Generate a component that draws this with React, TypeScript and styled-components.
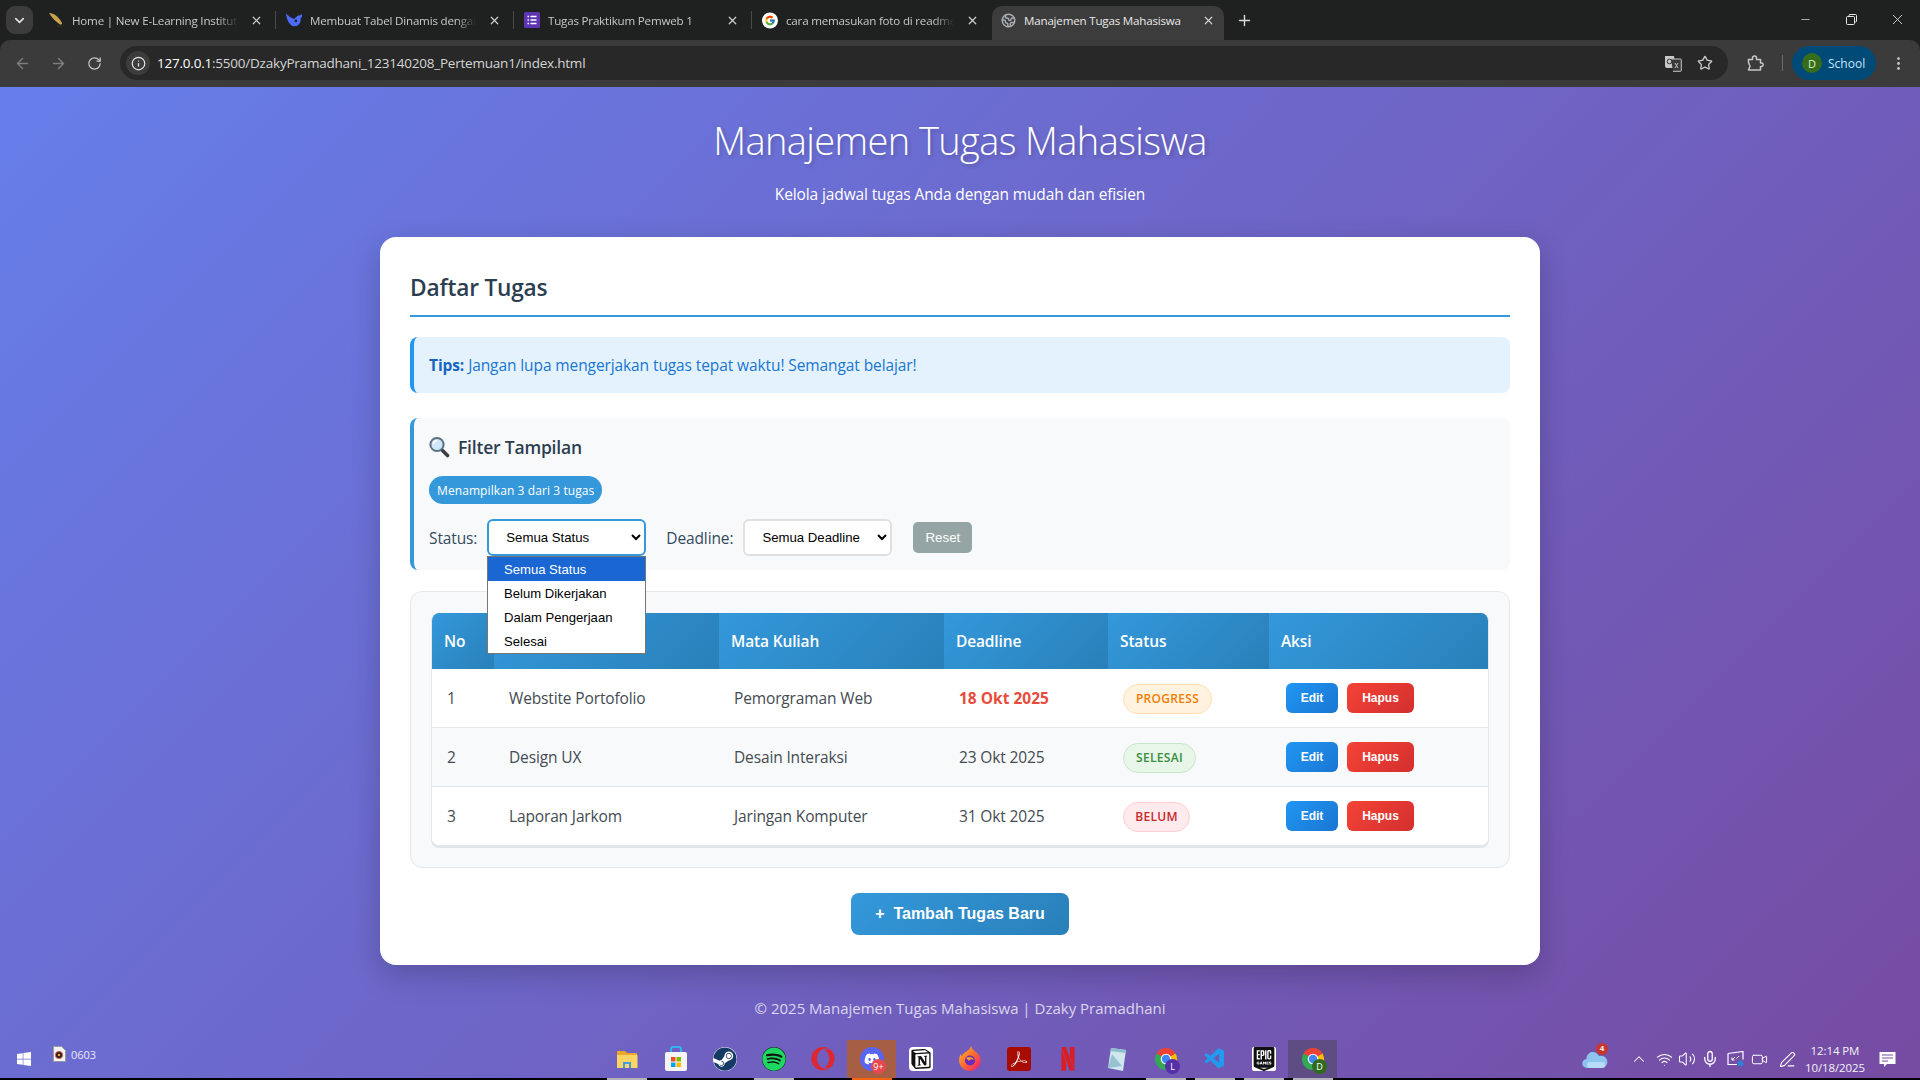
import React from "react";
import styled, { createGlobalStyle } from "styled-components";
import { FaWindows, FaSteam, FaSpotify, FaOpera, FaDiscord } from "react-icons/fa";
import { SiNotion, SiNetflix, SiEpicgames, SiAdobeacrobatreader } from "react-icons/si";
import { VscVscode } from "react-icons/vsc";
import { FcGoogle } from "react-icons/fc";
import { ArrowLeft, ArrowRight, RotateCw, Info, Star, EllipsisVertical, Minus, X, Plus, ChevronDown, ChevronUp, Wifi, Volume2, Mic, Video, PenLine, Earth } from "lucide-react";

const UI = `"Open Sans", "Noto Sans", sans-serif`;
const ARIAL = `"Liberation Sans", Arial, sans-serif`;

const Global = createGlobalStyle`
  html, body { margin: 0; padding: 0; width: 1920px; height: 1080px; overflow: hidden; background: #000; }
  * { box-sizing: border-box; }
  body { font-family: ${UI}; }
`;

const Root = styled.div`
  width: 1920px; height: 1080px; display: flex; flex-direction: column;
`;

/* ---------- browser chrome ---------- */
const BrowserChrome = styled.header`
  height: 87px; flex: none; background: #1f2121; display: flex; flex-direction: column;
`;
const TabStrip = styled.div`
  height: 40px; display: flex; align-items: flex-end; padding-left: 6px; position: relative;
`;
const TabSearch = styled.div`
  width: 27px; height: 28px; margin: 0 5px 6px 0; border-radius: 9px; background: #3c3c3c;
  display: flex; align-items: center; justify-content: center; color: #e3e3e3; flex: none;
`;
const Tab = styled.div<{ $active?: boolean; $w?: number }>`
  width: ${p => p.$w ?? 238}px; height: 34px; flex: none; display: flex; align-items: center; position: relative;
  padding: 0 ${p => (p.$active ? 8 : 12)}px 6px ${p => (p.$active ? 8 : 10)}px; border-radius: 10px 10px 0 0; font-size: 11.6px; font-family: ${UI};
  background: ${p => (p.$active ? "#3c3c3c" : "transparent")};
  color: ${p => (p.$active ? "#e8e8e8" : "#c7c7c7")};
`;
const TabIconBox = styled.span`
  width: 16px; height: 16px; flex: none; display: flex; align-items: center; justify-content: center; margin-right: 8px;
`;
const TabTitle = styled.span<{ $plain?: boolean }>`
  flex: 1; white-space: nowrap; overflow: hidden; letter-spacing: -0.2px;
  ${p => (p.$plain ? "" : `
  -webkit-mask-image: linear-gradient(90deg, #000 88%, transparent);
  mask-image: linear-gradient(90deg, #000 88%, transparent);`)}
`;
const TabClose = styled.span`
  width: 16px; height: 16px; flex: none; margin: 0 0 0 10px; display: flex; align-items: center; justify-content: center; color: #d0d0d0;
`;
const TabSep = styled.span`
  width: 1px; height: 18px; background: #4a4a4a; position: absolute; right: 0; top: 5px;
`;
const NewTab = styled.div`
  width: 30px; height: 28px; margin: 0 0 6px 5px; display: flex; align-items: center; justify-content: center; color: #d8d8d8;
`;
const WindowControls = styled.div`
  margin-left: auto; align-self: flex-start; display: flex; color: #e6e6e6;
`;
const WinBtn = styled.div`
  width: 46px; height: 38px; display: flex; align-items: center; justify-content: center;
`;
const Toolbar = styled.div`
  height: 47px; background: #3b3b3b; border-radius: 10px 10px 0 0; display: flex; align-items: flex-start; padding: 6px 0 0 0;
`;
const NavBtn = styled.div<{ $dim?: boolean }>`
  width: 36px; height: 34px; flex: none; display: flex; align-items: center; justify-content: center;
  color: ${p => (p.$dim ? "#7d7d7d" : "#c7c7c7")};
`;
const NavGroup = styled.div`
  display: flex; padding-left: 4px; width: 120px; flex: none;
`;
const Omnibox = styled.div`
  width: 1608px; height: 34px; background: #282828; border-radius: 17px; display: flex; align-items: center; padding: 0 6px; flex: none;
`;
const SiteInfo = styled.div`
  width: 24px; height: 24px; border-radius: 50%; background: #3c3c3c; color: #e3e3e3; display: flex; align-items: center; justify-content: center; margin-right: 7px; flex: none;
`;
const UrlText = styled.span`
  flex: 1; font-size: 13.5px; color: #d4d4d4; font-family: ${UI}; letter-spacing: -0.22px;
`;
const UrlHost = styled.span`
  color: #fff;
`;
const OmniIcon = styled.div<{ $w: number; $mr?: number }>`
  width: ${p => p.$w}px; margin-right: ${p => p.$mr ?? 0}px; display: flex; justify-content: center; align-items: center; color: #c7c7c7; flex: none;
`;
const ToolbarRight = styled.div`
  flex: 1; height: 34px; display: flex; align-items: center; color: #c7c7c7;
`;
const Divider = styled.span`
  width: 1px; height: 16px; background: #6a6a6a; margin: 0 9px 0 0; flex: none;
`;
const Profile = styled.div`
  width: 84px; height: 34px; border-radius: 17px; background: #004a77; display: flex; align-items: center; padding-left: 10px; color: #c2e7ff; font-size: 12px; font-family: ${UI}; flex: none;
`;
const Avatar = styled.span`
  width: 20px; height: 20px; border-radius: 50%; background: #356d1c; color: #d9f4c8; font-size: 11px; display: flex; align-items: center; justify-content: center; margin-right: 6px;
`;

/* ---------- page ---------- */
const Page = styled.main`
  flex: 1; min-height: 0; display: flex; flex-direction: column; align-items: center;
  background: linear-gradient(135deg, #667eea 0%, #764ba2 100%);
`;
const Title = styled.h1`
  margin: 28px 0 0; height: 50px; line-height: 50px; font-size: 38px; font-weight: 300; color: #fff; letter-spacing: -0.6px;
  text-shadow: 2px 2px 4px rgba(0,0,0,0.2); font-family: ${UI};
`;
const Subtitle = styled.p`
  margin: 18px 0 0; height: 22px; line-height: 22px; font-size: 15.5px; color: #fff; letter-spacing: -0.12px;
`;
const Card = styled.section`
  width: 1160px; height: 728px; margin-top: 32px; flex: none; background: #fff; border-radius: 16px; padding: 30px;
  box-shadow: 0 10px 30px rgba(0,0,0,0.2); position: relative;
`;
const CardTitle = styled.h2`
  margin: 0; height: 50px; line-height: 42px; font-size: 22.7px; font-weight: 600; color: #2c3e50; letter-spacing: -0.2px;
  border-bottom: 2px solid #3498db;
`;
const Tips = styled.div`
  margin-top: 20px; height: 56px; background: #e3f2fd; border-left: 4px solid #2196f3; border-radius: 8px;
  display: flex; align-items: center; padding-left: 15px; font-size: 15.5px; color: #1976d2; letter-spacing: -0.1px;
  strong { font-weight: 700; color: #1565c0; margin-right: 4px; }
`;
const FilterBox = styled.div`
  margin-top: 25px; height: 152px; background: #f8f9fa; border-left: 4px solid #3498db; border-radius: 8px;
  padding: 17px 15px 0; position: relative;
`;
const FilterHead = styled.h3`
  margin: 0; height: 24px; display: flex; align-items: center; gap: 8px; font-size: 17.5px; font-weight: 600; color: #2c3e50; letter-spacing: -0.2px;
`;
const CountBadge = styled.span`
  display: inline-flex; align-items: center; height: 28px; margin-top: 17px; padding: 0 8px; background: #3498db; color: #fff; border-radius: 14px; font-size: 12px; letter-spacing: 0.09px; white-space: nowrap;
`;
const FilterRow = styled.div`
  display: flex; align-items: center; margin-top: 15px; height: 37px;
`;
const FilterLabel = styled.label`
  font-size: 15.5px; font-weight: 500; color: #34495e; margin-right: 10px; letter-spacing: -0.12px;
`;
const FilterSelect = styled.select<{ $w: number; $focus?: boolean }>`
  width: ${p => p.$w}px; height: 37px; margin-right: ${p => (p.$focus ? 20 : 21)}px; padding: 0 8px 0 13px; background: #fff; color: #000;
  border: 2px solid ${p => (p.$focus ? "#3498db" : "#e0e0e0")}; border-radius: 6px; font: 13.2px ${ARIAL}; outline: none;
`;
const ResetBtn = styled.button`
  width: 59px; height: 31px; border: 0; border-radius: 5px; background: #95a5a6; color: #fff; font: 13.33px ${ARIAL}; padding: 0;
`;
const DropList = styled.ul`
  position: absolute; left: 73px; top: 138px; width: 159px; margin: 0; padding: 0; list-style: none; background: #fff;
  border: 1px solid #767676; z-index: 5;
`;
const DropItem = styled.li<{ $on?: boolean }>`
  height: 24px; padding-left: 16px; font: 13.1px/25px ${ARIAL};
  background: ${p => (p.$on ? "#1a66d2" : "#fff")}; color: ${p => (p.$on ? "#fff" : "#000")};
`;
const TableWrap = styled.div`
  margin-top: 21px; height: 277px; padding: 21px 20px 0; background: #f8f9fa; border: 1px solid #e4e8ec; border-radius: 12px;
`;
const TableBox = styled.div`
  border-radius: 8px; overflow: hidden; border: 1px solid #e2e7eb; border-top: 0; box-shadow: 0 2px 0 #dfe5ea; background: #fff;
`;
const DataTable = styled.table`
  width: 100%; border-collapse: separate; border-spacing: 0; table-layout: fixed;
`;
const Th = styled.th<{ $w: number }>`
  width: ${p => p.$w}px; height: 56px; padding: 0 12px; text-align: left; color: #fff; font-size: 15.5px; font-weight: 600; letter-spacing: -0.14px;
  background: linear-gradient(135deg, #3498db, #2980b9);
`;
const Tr = styled.tr<{ $alt?: boolean }>`
  background: ${p => (p.$alt ? "#f8f9fa" : "#fff")};
  &:last-child td { border-bottom: 0; height: 58px; }
`;
const Td = styled.td<{ $late?: boolean }>`
  height: 59px; padding: 0 15px; font-size: 15.5px; border-bottom: 1px solid #e4e8ec;
  color: ${p => (p.$late ? "#e74c3c" : "#444b52")}; font-weight: ${p => (p.$late ? 700 : 400)}; letter-spacing: ${p => (p.$late ? "0" : "-0.14px")};
`;
const Pill = styled.span<{ $bg: string; $fg: string; $bd: string; $w: number }>`
  display: flex; align-items: center; justify-content: center; width: ${p => p.$w}px; height: 30px; border-radius: 15px; margin-top: 1px;
  background: ${p => p.$bg}; color: ${p => p.$fg}; border: 1px solid ${p => p.$bd}; font-size: 12px; font-weight: 600; letter-spacing: 0.3px;
`;
const Actions = styled.div`
  display: flex; gap: 9px; padding-left: 2px;
`;
const SmallBtn = styled.button<{ $w: number; $from: string; $to: string }>`
  width: ${p => p.$w}px; height: 30px; border: 0; padding: 0; border-radius: 6px; color: #fff; font: bold 12px ${ARIAL};
  background: linear-gradient(135deg, ${p => p.$from}, ${p => p.$to});
`;
const AddRow = styled.div`
  display: flex; justify-content: center; margin-top: 25px;
`;
const AddBtn = styled.button`
  width: 218px; height: 42px; border: 0; border-radius: 8px; color: #fff; font: bold 16px ${ARIAL}; padding: 0;
  background: linear-gradient(135deg, #3498db, #2980b9); white-space: pre;
`;
const Footer = styled.footer`
  margin-top: 32px; height: 22px; line-height: 22px; font-size: 15px; color: rgba(255,255,255,0.75);
`;

/* ---------- taskbar ---------- */
const Taskbar = styled.div`
  width: 100%; height: 40px; margin-top: auto; display: flex; border-bottom: 2px solid #000; color: #fff; flex: none;
`;
const TaskLeft = styled.div`
  width: 602px; height: 38px; display: flex; align-items: center; flex: none;
`;
const StartBtn = styled.div`
  width: 48px; display: flex; justify-content: center;
`;
const DesktopFile = styled.div`
  display: flex; align-items: center; gap: 5px; margin: -10px 0 0 5px; font-size: 11px; color: #e8e8ff;
`;
const AppCell = styled.div<{ $bg?: string; $bar?: string }>`
  width: 49px; height: 38px; position: relative; display: flex; align-items: center; justify-content: center; flex: none;
  background: ${p => p.$bg ?? "transparent"};
  &::after {
    content: ""; position: absolute; left: 5px; right: 4px; bottom: -2px; height: 2px;
    background: ${p => p.$bar ?? "transparent"};
  }
`;
const AppRound = styled.span<{ $bg: string; $r?: string }>`
  width: 24px; height: 24px; border-radius: ${p => p.$r ?? "50%"}; background: ${p => p.$bg}; display: flex; align-items: center; justify-content: center;
`;
const AppBadge = styled.span<{ $bg: string }>`
  position: absolute; right: 10px; bottom: 4px; min-width: 15px; height: 15px; border-radius: 50%;
  background: ${p => p.$bg}; color: #fff; font-size: 9px; line-height: 15px; text-align: center;
`;
const Tray = styled.div`
  margin-left: auto; height: 38px; display: flex; align-items: center; padding-right: 12px; flex: none;
`;
const TraySlot = styled.div<{ $w: number; $ml?: number }>`
  width: ${p => p.$w}px; margin-left: ${p => p.$ml ?? 0}px; display: flex; justify-content: center; align-items: center; position: relative; flex: none;
`;
const Clock = styled.div`
  text-align: center; font-size: 11.5px; line-height: 17px; color: #f2f0f8; letter-spacing: -0.1px;
`;
const CloudBadge = styled.span`
  position: absolute; top: -6px; right: 7px; width: 12px; height: 12px; border-radius: 50%; background: #c8352c; color: #fff; font: bold 8px/12px ${ARIAL}; text-align: center;
`;

/* ---------- drawn icons ---------- */
const Feather = () => (
  <svg width="16" height="16" viewBox="0 0 16 16"><path d="M1 1c5 0 10 4 13 10 .4 1-1 2-2 1.400C8 10 4 6 1 1z" fill="#c9a24a" /><path d="M9 14h6" stroke="#3a3322" strokeWidth="1" /></svg>
);
const Whale = () => (
  <svg width="17" height="16" viewBox="0 0 17 16"><path d="M1 3c1 6 4 11 8 11 4 0 6-3 6-8 1-1 1.500-2 1.500-3-1 1-2 1-3 1-2 0-2 2-4 3C7 8 4 6 1 3z" fill="#4d6bfe" stroke="#4d6bfe" strokeWidth="1.400" /><circle cx="10.500" cy="9" r="1.400" fill="#1f2121" /></svg>
);
const FormsIcon = () => (
  <svg width="16" height="16" viewBox="0 0 16 16"><rect width="16" height="16" rx="1.500" fill="#5e35b1" /><path d="M3.500 4.500h1.500M6.500 4.500h6M3.500 8h1.500M6.500 8h6M3.500 11.500h1.500M6.500 11.500h6" stroke="#fff" strokeWidth="1.500" /></svg>
);
const GoogleFav = () => (
  <svg width="17" height="17" viewBox="0 0 17 17"><circle cx="8.500" cy="8.500" r="8.500" fill="#fff" /><g transform="translate(2.500 2.500) scale(0.25)"><foreignObject width="48" height="48"><FcGoogle size={48} /></foreignObject></g></svg>
);
const Restore = () => (
  <svg width="11" height="11" viewBox="0 0 11 11" fill="none" stroke="#e6e6e6"><rect x="0.500" y="2.500" width="8" height="8" rx="1" /><path d="M3 2.500V1.500a1 1 0 0 1 1-1h5.500a1 1 0 0 1 1 1V7a1 1 0 0 1-1 1h-1" /></svg>
);
const TranslateIcon = () => (
  <svg width="18" height="17" viewBox="0 0 18 17"><path d="M1 1h9l1.500 12H3a2 2 0 0 1-2-2z" fill="#c7c7c7" /><path d="M7 4h9.500a.8.8 0 0 1 .8.800V15.500a.8.8 0 0 1-.8.800H9" fill="#3b3b3b" stroke="#c7c7c7" /><circle cx="5.500" cy="6.500" r="2.300" fill="none" stroke="#333" strokeWidth="1" /><path d="M11 8l3 5M14 8l-3 5" stroke="#c7c7c7" /></svg>
);
const ExtensionIcon = () => (
  <svg width="18" height="18" viewBox="0 0 18 18" fill="none" stroke="#c7c7c7" strokeWidth="1.500" strokeLinejoin="round"><path d="M2.500 5.500h4V4a2 2 0 0 1 4 0v1.500h4v3.500H15.500a1.700 1.700 0 0 1 0 3.400H14.500V16h-12l1-2.500a2 2 0 0 0 0-2.500l-1-2.500z" /></svg>
);
const Magnifier = () => (
  <svg width="21" height="22" viewBox="0 0 21 22"><path d="M12.500 13.500l6 6" stroke="#3c3f44" strokeWidth="3.600" strokeLinecap="round" /><circle cx="8" cy="8.500" r="6.600" fill="#cfe8f8" stroke="#5b6f80" strokeWidth="2" /><path d="M4.500 8a4 4 0 0 1 3.500-3.500" stroke="#fff" strokeWidth="1.500" fill="none" /></svg>
);
const FolderIcon = () => (
  <svg width="24" height="24" viewBox="0 0 24 24"><path d="M2 4h8l2 2h10v3H2z" fill="#e8a92b" /><path d="M2 8h20.500v13H2z" fill="#fbd464" /><path d="M8 15h8v6H8z" fill="#3f9fd8" /><path d="M10 17h4v4h-4z" fill="#f6d87a" /></svg>
);
const StoreIcon = () => (
  <svg width="24" height="26" viewBox="0 0 24 26"><path d="M7 7V3a2 2 0 0 1 2-2h6a2 2 0 0 1 2 2v4" fill="none" stroke="#35b4ee" strokeWidth="2" /><rect x="1" y="6" width="22" height="19" rx="2" fill="#f5f5f5" /><rect x="7" y="11" width="4.500" height="4.500" fill="#f25022" /><rect x="12.500" y="11" width="4.500" height="4.500" fill="#7fba00" /><rect x="7" y="16.500" width="4.500" height="4.500" fill="#00a4ef" /><rect x="12.500" y="16.500" width="4.500" height="4.500" fill="#ffb900" /></svg>
);
const FirefoxIcon = () => (
  <svg width="24" height="26" viewBox="0 0 24 26"><defs><linearGradient id="ff" x1="0" y1="0" x2="1" y2="1"><stop offset="0" stopColor="#ffbd2e" /><stop offset="0.500" stopColor="#ff6a2e" /><stop offset="1" stopColor="#e31587" /></linearGradient></defs><path d="M12 25A11 11 0 0 1 1 14c0-2.500 1-5 2-6 0 1 .5 2 1 2 1-3 4-4 5-5 2-1 3-3 4-5 1 3 3 5 5 6 3 2 5 6 5 9a11 11 0 0 1-11 10z" fill="url(#ff)" /><circle cx="12" cy="14.500" r="5" fill="#6a2bb8" /><path d="M8 12c3-2 7-1 8 2-2-1-4-1-5 1z" fill="#ff9a2e" /></svg>
);
const NotepadIcon = () => (
  <svg width="24" height="26" viewBox="0 0 24 26"><path d="M6 2l15 2-3 21-15-3z" fill="#cfe7ee" /><path d="M6 2l15 2-.6 3-15-2z" fill="#8dbccb" /><path d="M7 8l10 12-14 2z" fill="#7fb2c4" opacity="0.7" /></svg>
);
const ChromeIcon = () => (
  <svg width="24" height="24" viewBox="0 0 24 24"><path d="M12 12L2.470 6.500A11 11 0 0 1 21.530 6.500Z" fill="#ea4335" /><path d="M12 12L21.530 6.500A11 11 0 0 1 12 23Z" fill="#fbbc04" /><path d="M12 12L12 23A11 11 0 0 1 2.470 6.500Z" fill="#34a853" /><circle cx="12" cy="12" r="5.300" fill="#fff" /><circle cx="12" cy="12" r="4.200" fill="#4285f4" /></svg>
);
const DesktopDoc = () => (
  <svg width="13" height="16" viewBox="0 0 13 16"><path d="M0.500 0.500h8l4 4v11h-12z" fill="#f4f4f4" stroke="#9a9a9a" /><circle cx="6" cy="9" r="3.600" fill="#222" stroke="#e2574c" strokeWidth="1" /><circle cx="6" cy="9" r="1.300" fill="#f0a030" /></svg>
);
const Cloud = () => (
  <svg width="26" height="20" viewBox="0 0 26 20"><path d="M5 19a4.500 4.500 0 0 1-.5-9A6.500 6.500 0 0 1 17 7a5.500 5.500 0 0 1 4 12z" fill="#8ec4ee" /><path d="M8 19a3 3 0 0 1 0-6h12a3 3 0 0 1 0 6z" fill="#b6dcf7" /></svg>
);
const MonitorTray = () => (
  <svg width="17" height="16" viewBox="0 0 17 16" fill="none" stroke="#fff"><path d="M1 2.500l15-2v8M1 2.500v11h9" strokeWidth="1.200" /><path d="M5 9l3-3M5 6.500V9h2.500M12 5L9.500 7.500" strokeWidth="1" /><circle cx="13.500" cy="12.500" r="3" fill="#2f7fd6" stroke="none" /></svg>
);
const Notify = () => (
  <svg width="17" height="17" viewBox="0 0 17 17"><path d="M0.500 1h16v12H8l-3 3v-3H.5z" fill="#fff" /><path d="M3 4h11M3 7h11M3 10h6" stroke="#7a4ea0" strokeWidth="1" /></svg>
);

const tabs = [
  { t: "Home | New E-Learning Institut", i: <Feather />, w: 238 },
  { t: "Membuat Tabel Dinamis dengan", i: <Whale />, w: 238 },
  { t: "Tugas Praktikum Pemweb 1", i: <FormsIcon />, w: 238 },
  { t: "cara memasukan foto di readme", i: <GoogleFav />, w: 240 },
];

const rows = [
  { n: 1, t: "Webstite Portofolio", m: "Pemorgraman Web", d: "18 Okt 2025", late: true, s: "PROGRESS", bg: "#fff3e0", fg: "#f57c00", bd: "#ffe0b2", w: 89 },
  { n: 2, t: "Design UX", m: "Desain Interaksi", d: "23 Okt 2025", late: false, s: "SELESAI", bg: "#e8f5e9", fg: "#388e3c", bd: "#c8e6c9", w: 73 },
  { n: 3, t: "Laporan Jarkom", m: "Jaringan Komputer", d: "31 Okt 2025", late: false, s: "BELUM", bg: "#ffebee", fg: "#c62828", bd: "#ffcdd2", w: 67 },
];

const BAR = "#b4b0bc";

export default function App() {
  return (
    <Root>
      <Global />
      <BrowserChrome>
        <TabStrip>
          <TabSearch><ChevronDown size={15} strokeWidth={2.6} /></TabSearch>
          {tabs.map((tab, i) => (
            <Tab key={i} $w={tab.w}>
              <TabIconBox>{tab.i}</TabIconBox>
              <TabTitle>{tab.t}</TabTitle>
              <TabClose><X size={13} strokeWidth={2.2} /></TabClose>
              {i < 3 && <TabSep />}
            </Tab>
          ))}
          <Tab $active $w={232}>
            <TabIconBox><Earth size={15} color="#a8adb3" strokeWidth={2.4} /></TabIconBox>
            <TabTitle $plain>Manajemen Tugas Mahasiswa</TabTitle>
            <TabClose><X size={13} strokeWidth={2.2} /></TabClose>
          </Tab>
          <NewTab><Plus size={17} /></NewTab>
          <WindowControls>
            <WinBtn><Minus size={13} strokeWidth={1.3} /></WinBtn>
            <WinBtn><Restore /></WinBtn>
            <WinBtn><X size={17} strokeWidth={1.2} /></WinBtn>
          </WindowControls>
        </TabStrip>
        <Toolbar>
          <NavGroup>
            <NavBtn $dim><ArrowLeft size={17} /></NavBtn>
            <NavBtn $dim><ArrowRight size={17} /></NavBtn>
            <NavBtn><RotateCw size={15} /></NavBtn>
          </NavGroup>
          <Omnibox>
            <SiteInfo><Info size={15} /></SiteInfo>
            <UrlText><UrlHost>127.0.0.1</UrlHost>:5500/DzakyPramadhani_123140208_Pertemuan1/index.html</UrlText>
            <OmniIcon $w={32}><TranslateIcon /></OmniIcon>
            <OmniIcon $w={32} $mr={1}><Star size={16} /></OmniIcon>
          </Omnibox>
          <ToolbarRight>
            <OmniIcon $w={54}><ExtensionIcon /></OmniIcon>
            <Divider />
            <Profile><Avatar>D</Avatar>School</Profile>
            <OmniIcon $w={44}><EllipsisVertical size={17} /></OmniIcon>
          </ToolbarRight>
        </Toolbar>
      </BrowserChrome>

      <Page>
        <Title>Manajemen Tugas Mahasiswa</Title>
        <Subtitle>Kelola jadwal tugas Anda dengan mudah dan efisien</Subtitle>
        <Card>
          <CardTitle>Daftar Tugas</CardTitle>
          <Tips><strong>Tips:</strong> Jangan lupa mengerjakan tugas tepat waktu! Semangat belajar!</Tips>
          <FilterBox>
            <FilterHead><Magnifier />Filter Tampilan</FilterHead>
            <CountBadge>Menampilkan 3 dari 3 tugas</CountBadge>
            <FilterRow>
              <FilterLabel>Status:</FilterLabel>
              <FilterSelect $w={159} $focus defaultValue="Semua Status">
                <option>Semua Status</option>
                <option>Belum Dikerjakan</option>
                <option>Dalam Pengerjaan</option>
                <option>Selesai</option>
              </FilterSelect>
              <FilterLabel>Deadline:</FilterLabel>
              <FilterSelect $w={149} defaultValue="Semua Deadline">
                <option>Semua Deadline</option>
              </FilterSelect>
              <ResetBtn>Reset</ResetBtn>
            </FilterRow>
            <DropList>
              <DropItem $on>Semua Status</DropItem>
              <DropItem>Belum Dikerjakan</DropItem>
              <DropItem>Dalam Pengerjaan</DropItem>
              <DropItem>Selesai</DropItem>
            </DropList>
          </FilterBox>
          <TableWrap>
            <TableBox>
              <DataTable>
                <thead>
                  <tr>
                    <Th $w={62}>No</Th>
                    <Th $w={225}>Tugas</Th>
                    <Th $w={225}>Mata Kuliah</Th>
                    <Th $w={164}>Deadline</Th>
                    <Th $w={161}>Status</Th>
                    <Th $w={219}>Aksi</Th>
                  </tr>
                </thead>
                <tbody>
                  {rows.map((r, i) => (
                    <Tr key={r.n} $alt={i === 1}>
                      <Td>{r.n}</Td>
                      <Td>{r.t}</Td>
                      <Td>{r.m}</Td>
                      <Td $late={r.late}>{r.d}</Td>
                      <Td><Pill $bg={r.bg} $fg={r.fg} $bd={r.bd} $w={r.w}>{r.s}</Pill></Td>
                      <Td>
                        <Actions>
                          <SmallBtn $w={52} $from="#2196f3" $to="#1976d2">Edit</SmallBtn>
                          <SmallBtn $w={67} $from="#f44336" $to="#d32f2f">Hapus</SmallBtn>
                        </Actions>
                      </Td>
                    </Tr>
                  ))}
                </tbody>
              </DataTable>
            </TableBox>
          </TableWrap>
          <AddRow><AddBtn>{"+  Tambah Tugas Baru"}</AddBtn></AddRow>
        </Card>
        <Footer>© 2025 Manajemen Tugas Mahasiswa | Dzaky Pramadhani</Footer>

        <Taskbar>
          <TaskLeft>
            <StartBtn><FaWindows size={16} color="#fff" /></StartBtn>
            <DesktopFile><DesktopDoc />0603</DesktopFile>
          </TaskLeft>
          <AppCell $bar={BAR}><FolderIcon /></AppCell>
          <AppCell><StoreIcon /></AppCell>
          <AppCell><AppRound $bg="#fff"><FaSteam size={24} color="#143a66" /></AppRound></AppCell>
          <AppCell $bar={BAR}><AppRound $bg="#111"><FaSpotify size={24} color="#1ed760" /></AppRound></AppCell>
          <AppCell><FaOpera size={24} color="#e0262f" /></AppCell>
          <AppCell $bg="#a65f45" $bar="#f7630c">
            <AppRound $bg="#5865f2"><FaDiscord size={16} color="#fff" /></AppRound>
            <AppBadge $bg="#e5484d">9+</AppBadge>
          </AppCell>
          <AppCell><AppRound $bg="#fff" $r="4px"><SiNotion size={20} color="#111" /></AppRound></AppCell>
          <AppCell><FirefoxIcon /></AppCell>
          <AppCell><AppRound $bg="#a80c00" $r="3px"><SiAdobeacrobatreader size={16} color="#fff" /></AppRound></AppCell>
          <AppCell><SiNetflix size={24} color="#d81f26" /></AppCell>
          <AppCell><NotepadIcon /></AppCell>
          <AppCell $bar={BAR}><ChromeIcon /><AppBadge $bg="#5530a8">L</AppBadge></AppCell>
          <AppCell $bar={BAR}><VscVscode size={24} color="#1f9cf0" /></AppCell>
          <AppCell $bar={BAR}><AppRound $bg="#fff" $r="2px"><SiEpicgames size={24} color="#111" /></AppRound></AppCell>
          <AppCell $bg="#5e4d85" $bar={BAR}><ChromeIcon /><AppBadge $bg="#2f6b1e">D</AppBadge></AppCell>
          <Tray>
            <TraySlot $w={40}><Cloud /><CloudBadge>4</CloudBadge></TraySlot>
            <TraySlot $w={24} $ml={12}><ChevronUp size={18} strokeWidth={1.4} /></TraySlot>
            <TraySlot $w={24} $ml={1}><Wifi size={17} strokeWidth={1.5} /></TraySlot>
            <TraySlot $w={22}><Volume2 size={18} strokeWidth={1.4} /></TraySlot>
            <TraySlot $w={24}><Mic size={18} strokeWidth={1.7} /></TraySlot>
            <TraySlot $w={26}><MonitorTray /></TraySlot>
            <TraySlot $w={22}><Video size={17} strokeWidth={1.4} /></TraySlot>
            <TraySlot $w={34}><PenLine size={17} strokeWidth={1.5} /></TraySlot>
            <TraySlot $w={62}><Clock>12:14 PM<br />10/18/2025</Clock></TraySlot>
            <TraySlot $w={42}><Notify /></TraySlot>
          </Tray>
        </Taskbar>
      </Page>
    </Root>
  );
}
